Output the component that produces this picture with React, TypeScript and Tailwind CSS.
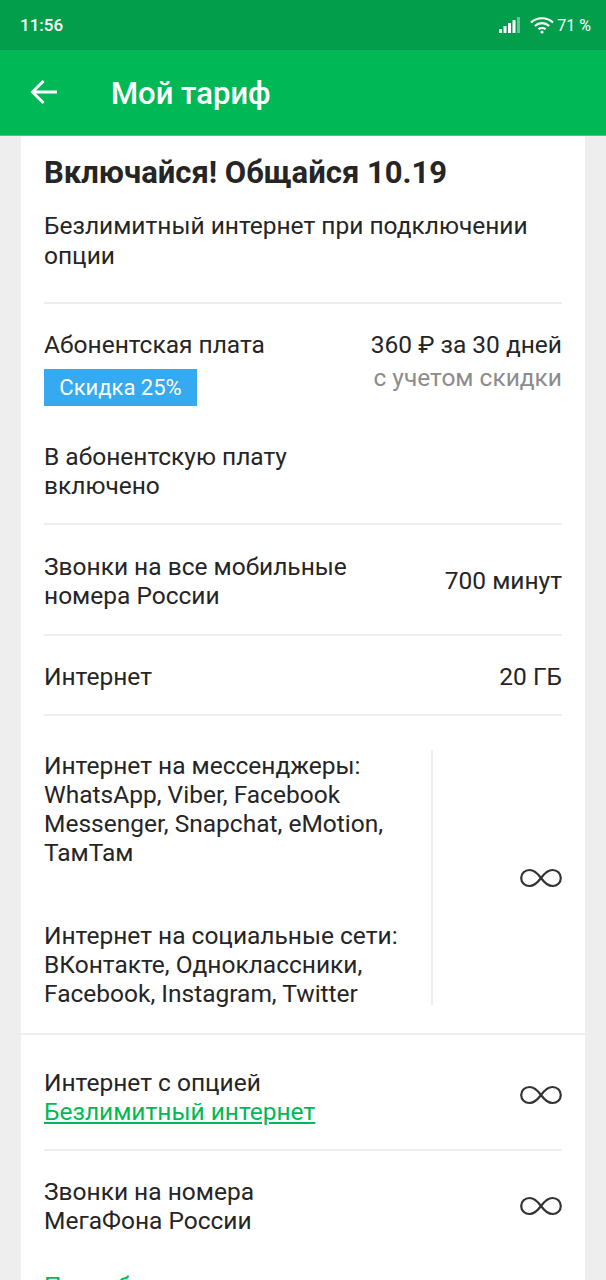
const Infinity8 = ({ className = '' }: { className?: string }) => (
    <svg width="42" height="20" viewBox="0 0 42 20" fill="none" stroke="#333" strokeWidth="2.2" className={`shrink-0 ${className}`}>
        <path d="M21 10C17 4.5 14 2 9.5 2C4.8 2 1.2 5.5 1.2 10C1.2 14.5 4.8 18 9.5 18C14 18 17 15.5 21 10C25 4.5 28 2 32.5 2C37.2 2 40.8 5.5 40.8 10C40.8 14.5 37.2 18 32.5 18C28 18 25 15.5 21 10Z" />
    </svg>
);

const Signal = () => (
    <svg width="22" height="18" viewBox="0 0 22 18" fill="white">
        <rect x="0" y="13" width="3" height="4" />
        <rect x="4.5" y="10" width="3" height="7" />
        <rect x="9" y="7" width="3" height="10" />
        <rect x="13.5" y="4" width="3" height="13" />
        <rect x="18" y="1" width="3" height="16" opacity="0.4" />
    </svg>
);

const Wifi = () => (
    <svg width="24" height="18" viewBox="0 0 24 18" fill="none" stroke="white" strokeWidth="2.2">
        <path d="M1 6.5C7 0.8 17 0.8 23 6.5" />
        <path d="M4.8 10C9 6.2 15 6.2 19.2 10" />
        <path d="M8.4 13.2C10.4 11.6 13.6 11.6 15.6 13.2" />
        <circle cx="12" cy="16" r="1.6" fill="white" stroke="none" />
    </svg>
);

const Divider = () => <div className="h-[2px] bg-[#eeeeee]" />;

export default function App() {
    return (
        <div className="h-[1280px] overflow-hidden bg-[#eeeeee] font-['Roboto',sans-serif] text-[24.5px] leading-[29px] text-[#252525]">
            <div className="flex h-[50px] items-center justify-between bg-[#039e4c] pl-5 pr-[15px] text-white">
                <span className="text-[17px] font-medium">11:56</span>
                <div className="flex items-center">
                    <Signal />
                    <div className="ml-[9px]"><Wifi /></div>
                    <span className="ml-[3px] text-[16px]">71 %</span>
                </div>
            </div>
            <header className="flex h-[86px] items-center border-b border-[#3fcb80] bg-[#00b956] pl-[30px] text-white">
                <svg width="28" height="26" viewBox="0 0 28 26" fill="none" stroke="white" strokeWidth="3" className="mb-[1px]">
                    <path d="M27 13H3M13.5 2L2.5 13L13.5 24" />
                </svg>
                <h1 className="ml-[53px] mt-[2px] text-[31px] font-medium">Мой тариф</h1>
            </header>
            <main className="mx-[21px] bg-white">
                <div className="px-[23px] pt-[19px]">
                    <h2 className="text-[31px] leading-[36px] font-bold">Включайся! Общайся 10.19</h2>
                    <p className="mt-[20px] leading-[30px]">Безлимитный интернет при подключении опции</p>
                    <div className="mt-[31px]"><Divider /></div>

                    <div className="flex justify-between pt-[26px]">
                        <div>
                            <div>Абонентская плата</div>
                            <div className="mt-[10px] flex h-[37px] w-[153px] items-center justify-center bg-[#36aaf1] text-[22px] text-white">Скидка 25%</div>
                        </div>
                        <div className="text-right">
                            <div>360 ₽ за 30 дней</div>
                            <div className="mt-[4px] text-[#8c8c8c]">с учетом скидки</div>
                        </div>
                    </div>
                    <p className="mt-[36px] pb-[23px]">В абонентскую плату<br />включено</p>
                    <Divider />

                    <div className="flex items-center justify-between pt-[27px] pb-[24px]">
                        <div>Звонки на все мобильные<br />номера России</div>
                        <div className="mb-[1px]">700 минут</div>
                    </div>
                    <Divider />

                    <div className="flex items-center justify-between pt-[26px] pb-[23px]">
                        <div>Интернет</div>
                        <div>20 ГБ</div>
                    </div>
                    <Divider />

                    <div className="flex items-center justify-between pt-[34px] pb-[28px]">
                        <div className="flex h-[255px] w-[389px] flex-col gap-[54px] border-r-2 border-[#eeeeee] pt-[1px]">
                            <div>Интернет на мессенджеры:<br />WhatsApp, Viber, Facebook<br />Messenger, Snapchat, eMotion,<br />ТамТам</div>
                            <div>Интернет на социальные сети:<br />ВКонтакте, Одноклассники,<br />Facebook, Instagram, Twitter</div>
                        </div>
                        <Infinity8 />
                    </div>
                </div>
                <Divider />
                <div className="px-[23px]">
                    <div className="flex items-center justify-between pt-[33px] pb-[23px]">
                        <div>
                            Интернет с опцией<br />
                            <a className="text-[#00b956] underline underline-offset-2">Безлимитный интернет</a>
                        </div>
                        <Infinity8 className="mb-[5px]" />
                    </div>
                    <Divider />
                    <div className="flex items-center justify-between pt-[26px] pb-[36px]">
                        <div>Звонки на номера<br />МегаФона России</div>
                        <Infinity8 />
                    </div>
                    <a className="text-[#00b956]">Подробнее</a>
                </div>
            </main>
        </div>
    );
}
